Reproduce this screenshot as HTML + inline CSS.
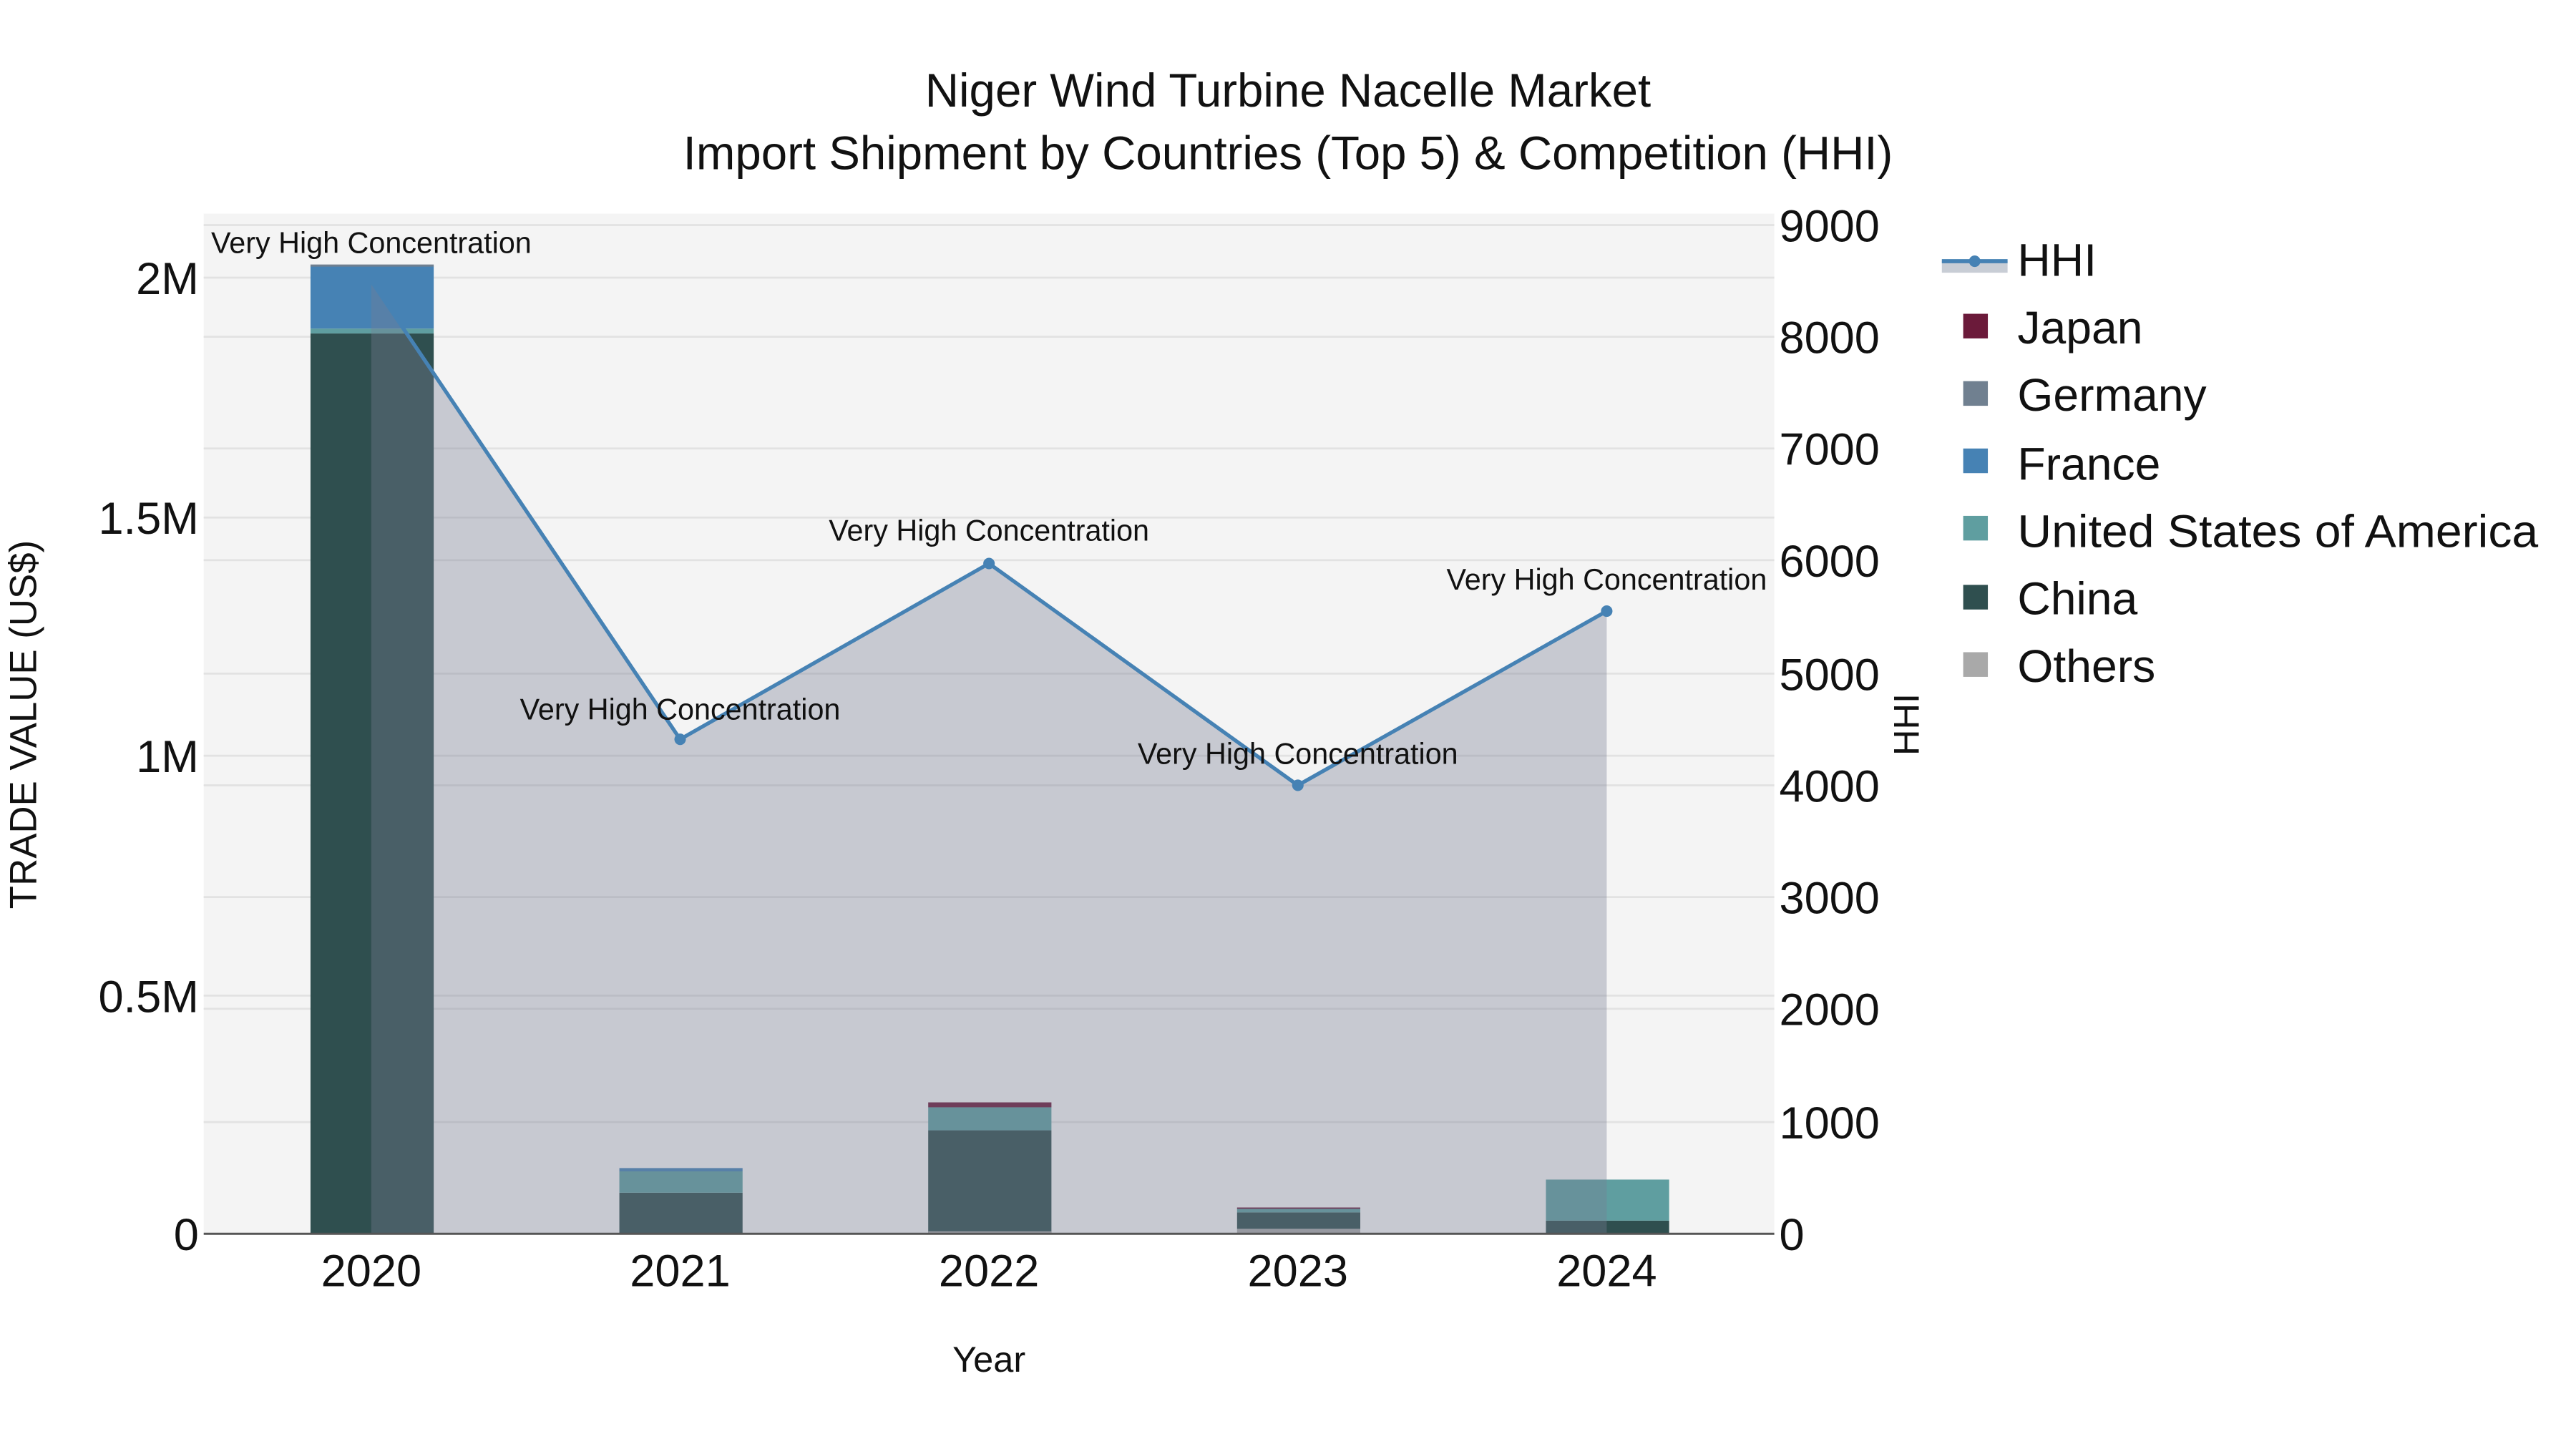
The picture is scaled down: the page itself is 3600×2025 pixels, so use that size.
<!DOCTYPE html>
<html><head><meta charset="utf-8"><style>
html,body{margin:0;padding:0;background:#fff;}
svg{display:block;}
text{font-family:"Liberation Sans",sans-serif;fill:#111;}
</style></head><body>
<svg width="3600" height="2025" viewBox="0 0 1568 882" xmlns="http://www.w3.org/2000/svg">
<rect x="0" y="0" width="1568" height="882" fill="#fff"/>
<rect x="124" y="130" width="956" height="621" fill="#f4f4f4"/>
<g stroke="#e2e2e2" stroke-width="1.2">
<line x1="124" x2="1080" y1="169" y2="169"/><line x1="124" x2="1080" y1="315" y2="315"/>
<line x1="124" x2="1080" y1="460" y2="460"/><line x1="124" x2="1080" y1="606" y2="606"/>
<line x1="124" x2="1080" y1="137" y2="137"/><line x1="124" x2="1080" y1="205" y2="205"/>
<line x1="124" x2="1080" y1="273" y2="273"/><line x1="124" x2="1080" y1="341" y2="341"/>
<line x1="124" x2="1080" y1="410" y2="410"/><line x1="124" x2="1080" y1="478" y2="478"/>
<line x1="124" x2="1080" y1="546" y2="546"/><line x1="124" x2="1080" y1="614" y2="614"/>
<line x1="124" x2="1080" y1="683" y2="683"/>
</g>
<rect x="189" y="203" width="75" height="548" fill="#2f4f4f"/>
<rect x="189" y="200" width="75" height="3" fill="#5f9ea0"/>
<rect x="189" y="162" width="75" height="38" fill="#4682b4"/>
<rect x="189" y="161" width="75" height="1.3" fill="#708090"/>
<rect x="377" y="726" width="75" height="25" fill="#2f4f4f"/>
<rect x="377" y="713" width="75" height="13" fill="#5f9ea0"/>
<rect x="377" y="711" width="75" height="2" fill="#4682b4"/>
<rect x="565" y="688" width="75" height="63" fill="#2f4f4f"/>
<rect x="565" y="674" width="75" height="14" fill="#5f9ea0"/>
<rect x="565" y="671" width="75" height="3" fill="#6b1a3a"/>
<rect x="565" y="749.5" width="75" height="1.5" fill="#a9a9a9"/>
<rect x="753" y="738" width="75" height="10" fill="#2f4f4f"/>
<rect x="753" y="735.5" width="75" height="2.5" fill="#5f9ea0"/>
<rect x="753" y="735" width="75" height="0.8" fill="#6b1a3a"/>
<rect x="753" y="748" width="75" height="3" fill="#a9a9a9"/>
<rect x="941" y="743" width="75" height="8" fill="#2f4f4f"/>
<rect x="941" y="718" width="75" height="25" fill="#5f9ea0"/>
<polygon points="226,171 414,450 602,343 790,478 978,372 978,751 226,751" fill="rgb(120,126,148)" fill-opacity="0.36"/>
<line x1="124" x2="1080" y1="751" y2="751" stroke="#555" stroke-width="1.3"/>
<polyline points="226,171 414,450 602,343 790,478 978,372" fill="none" stroke="#4682b4" stroke-width="2.3"/>
<g fill="#4682b4"><circle cx="414" cy="450" r="3.5"/><circle cx="602" cy="343" r="3.5"/><circle cx="790" cy="478" r="3.5"/><circle cx="978" cy="372" r="3.5"/></g>
<g font-size="18" text-anchor="middle">
<text x="226" y="154">Very High Concentration</text>
<text x="414" y="438">Very High Concentration</text>
<text x="602" y="329">Very High Concentration</text>
<text x="790" y="465">Very High Concentration</text>
<text x="978" y="359">Very High Concentration</text>
</g>
<g font-size="28.5" text-anchor="middle">
<text x="784" y="65">Niger Wind Turbine Nacelle Market</text>
<text x="784" y="103">Import Shipment by Countries (Top 5) &amp; Competition (HHI)</text>
</g>
<g font-size="27.5" text-anchor="end">
<text x="121" y="761">0</text><text x="121" y="616">0.5M</text><text x="121" y="470">1M</text>
<text x="121" y="325">1.5M</text><text x="121" y="179">2M</text>
</g>
<g font-size="27.5">
<text x="1083" y="761">0</text><text x="1083" y="693">1000</text><text x="1083" y="624">2000</text>
<text x="1083" y="556">3000</text><text x="1083" y="488">4000</text><text x="1083" y="420">5000</text>
<text x="1083" y="351">6000</text><text x="1083" y="283">7000</text><text x="1083" y="215">8000</text>
<text x="1083" y="147">9000</text>
</g>
<g font-size="27.5" text-anchor="middle">
<text x="226" y="783">2020</text><text x="414" y="783">2021</text><text x="602" y="783">2022</text>
<text x="790" y="783">2023</text><text x="978" y="783">2024</text>
</g>
<text x="602" y="835" font-size="22" text-anchor="middle">Year</text>
<text transform="translate(22,441) rotate(-90)" font-size="23" text-anchor="middle">TRADE VALUE (US$)</text>
<text transform="translate(1168,441) rotate(-90)" font-size="22" text-anchor="middle">HHI</text>
<rect x="1182" y="159" width="40" height="7" fill="#c8cdd5"/>
<line x1="1182" x2="1222" y1="159" y2="159" stroke="#4682b4" stroke-width="2.5"/>
<circle cx="1202" cy="159" r="3.5" fill="#4682b4"/>
<rect x="1195" y="191" width="15" height="15" fill="#6b1a3a"/>
<rect x="1195" y="232" width="15" height="15" fill="#708090"/>
<rect x="1195" y="273" width="15" height="15" fill="#4682b4"/>
<rect x="1195" y="314" width="15" height="15" fill="#5f9ea0"/>
<rect x="1195" y="356" width="15" height="15" fill="#2f4f4f"/>
<rect x="1195" y="397" width="15" height="15" fill="#a9a9a9"/>
<g font-size="28">
<text x="1228" y="168">HHI</text><text x="1228" y="209">Japan</text><text x="1228" y="250">Germany</text>
<text x="1228" y="292">France</text><text x="1228" y="333" textLength="317" lengthAdjust="spacingAndGlyphs">United States of America</text>
<text x="1228" y="374">China</text><text x="1228" y="415">Others</text>
</g>
</svg>
</body></html>
